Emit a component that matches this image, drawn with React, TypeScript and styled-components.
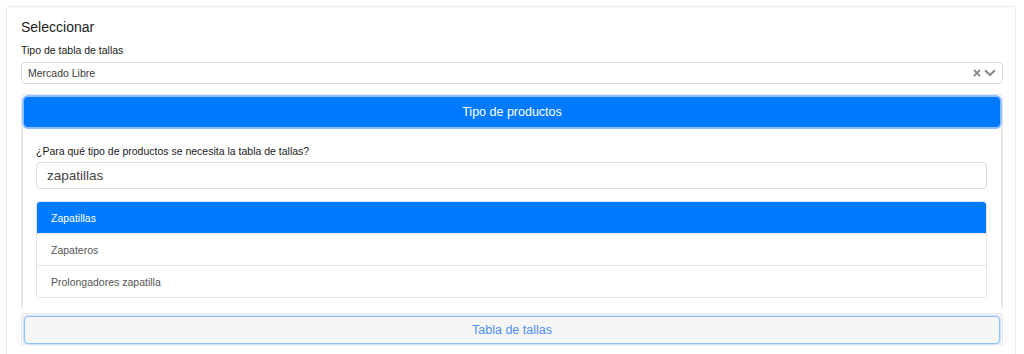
import React from "react";
import styled, { createGlobalStyle } from "styled-components";

const Global = createGlobalStyle`
  html, body { margin: 0; padding: 0; background: #ffffff; }
  body { font-family: "Liberation Sans", Arial, sans-serif; color: #212529; }
`;

const Page = styled.div`
  padding: 6px 8px 0 6px;
`;

const Card = styled.div`
  border: 1px solid #ececec;
  border-bottom: none;
  border-radius: 4px 4px 0 0;
  padding: 12px 12px 0 14px;
  min-height: 360px;
  box-sizing: border-box;
`;

const Title = styled.div`
  font-size: 14px;
  color: #222;
  line-height: 16px;
  margin-bottom: 9px;
`;

const Label = styled.div`
  font-size: 10.5px;
  color: #222;
  line-height: 12px;
  margin-bottom: 6px;
`;

const Select = styled.div`
  display: flex;
  align-items: center;
  height: 22px;
  border: 1px solid #dcdcdc;
  border-radius: 4px;
  padding: 0 6px;
  font-size: 10.5px;
  color: #3a3a3a;
  box-sizing: border-box;
  margin-bottom: 10px;
`;

const SelectText = styled.span`
  flex: 1;
`;

const SelectIcons = styled.span`
  display: flex;
  align-items: center;
  gap: 3px;
  color: #8a8a8a;
`;

const Accordion = styled.div`
  border: 1px solid #e8e8e8;
  border-bottom: none;
  border-radius: 4px 4px 0 0;
  padding: 2px 2px 0 2px;
`;

const Header = styled.div<{ $active?: boolean }>`
  height: ${(p) => (p.$active ? "30px" : "28px")};
  display: flex;
  align-items: center;
  justify-content: center;
  border-radius: 4px;
  font-size: 12.5px;
  box-sizing: border-box;
  background: ${(p) => (p.$active ? "#007bff" : "#f5f5f5")};
  color: ${(p) => (p.$active ? "#ffffff" : "#4d8ff0")};
  border: ${(p) => (p.$active ? "none" : "1px solid #8ec0f7")};
  box-shadow: ${(p) =>
    p.$active ? "0 0 0 2px #8fc0ff" : "0 0 0 1px #cfe3fb"};
`;

const Body = styled.div`
  padding: 18px 14px 11px 13px;
  border-left: 1px solid #e8e8e8;
  border-right: 1px solid #e8e8e8;
  margin: 0 -2px;
`;

const Question = styled.div`
  font-size: 10.5px;
  color: #222;
  line-height: 12px;
  margin-bottom: 5px;
`;

const Input = styled.div`
  height: 27px;
  border: 1px solid #dedede;
  border-radius: 4px;
  display: flex;
  align-items: center;
  padding: 0 10px;
  font-size: 13.5px;
  color: #444;
  box-sizing: border-box;
  margin-bottom: 12px;
`;

const List = styled.div`
  border: 1px solid #e3e3e3;
  border-radius: 4px;
  overflow: hidden;
`;

const Item = styled.div<{ $active?: boolean }>`
  height: 31px;
  display: flex;
  align-items: center;
  padding: 0 14px;
  font-size: 10.5px;
  background: ${(p) => (p.$active ? "#007bff" : "#ffffff")};
  color: ${(p) => (p.$active ? "#ffffff" : "#555")};
  & + & { border-top: 1px solid #e6e6e6; }
`;

const Second = styled(Accordion)`
  margin-top: 4px;
  padding: 2px;
  background: #f7f7f7;
`;

const Chevron = () => (
  <svg width="12" height="8" viewBox="0 0 12 8">
    <path d="M1 1.2 L6 6 L11 1.2" stroke="#8a8a8a" strokeWidth="2.2" fill="none" />
  </svg>
);

const Cross = () => (
  <svg width="8" height="8" viewBox="0 0 8 8">
    <path d="M1 1 L7 7 M7 1 L1 7" stroke="#8a8a8a" strokeWidth="1.8" fill="none" />
  </svg>
);

export default function App() {
  return (
    <>
      <Global />
      <Page>
        <Card>
          <Title>Seleccionar</Title>
          <Label>Tipo de tabla de tallas</Label>
          <Select>
            <SelectText>Mercado Libre</SelectText>
            <SelectIcons>
              <Cross />
              <Chevron />
            </SelectIcons>
          </Select>
          <Accordion>
            <Header $active>Tipo de productos</Header>
            <Body>
              <Question>¿Para qué tipo de productos se necesita la tabla de tallas?</Question>
              <Input>zapatillas</Input>
              <List>
                <Item $active>Zapatillas</Item>
                <Item>Zapateros</Item>
                <Item>Prolongadores zapatilla</Item>
              </List>
            </Body>
          </Accordion>
          <Second>
            <Header>Tabla de tallas</Header>
          </Second>
        </Card>
      </Page>
    </>
  );
}
